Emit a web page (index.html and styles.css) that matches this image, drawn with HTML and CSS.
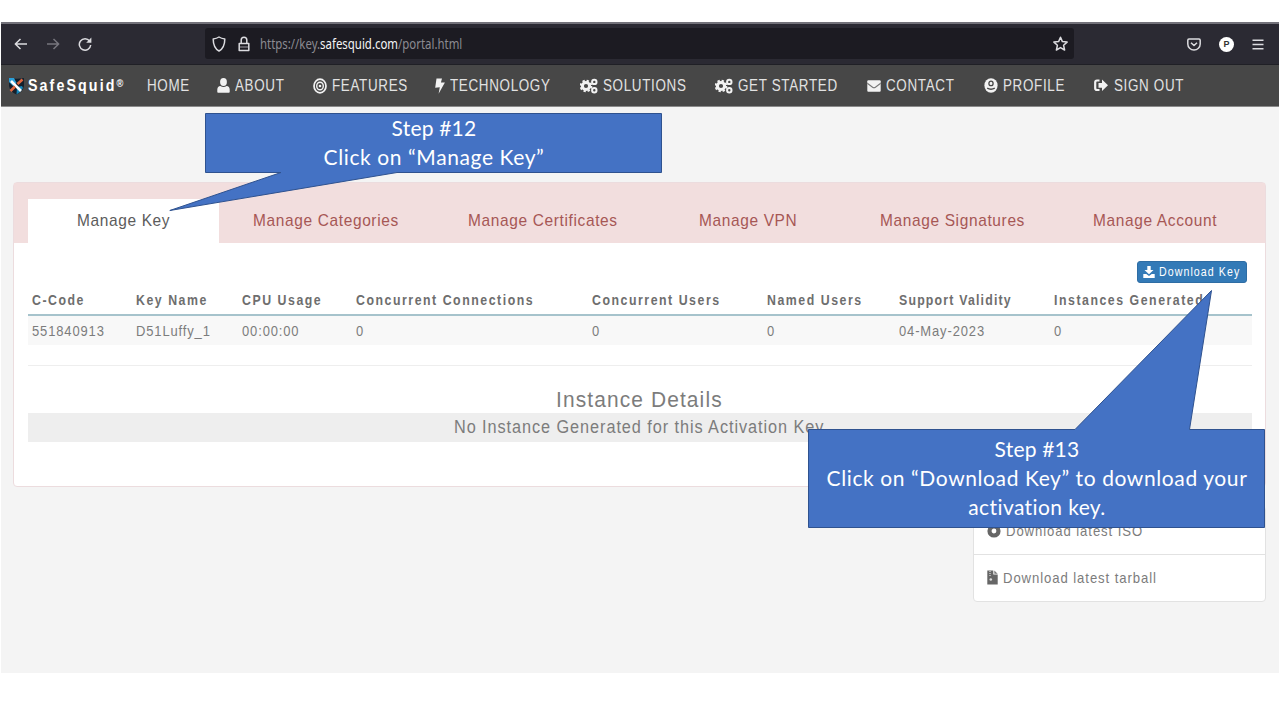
FILE: index.html
```html
<!DOCTYPE html>
<html lang="en">
<head>
<meta charset="utf-8">
<title>SafeSquid Portal</title>
<link rel="stylesheet" href="styles.css">
</head>
<body>
<svg class="defs" width="0" height="0">
  <defs>
    <symbol id="gears" viewBox="0 0 18 16">
      <circle cx="6" cy="8" r="3.600" fill="none" stroke="#f2f2f2" stroke-width="3"/>
      <circle cx="6" cy="8" r="5.300" fill="none" stroke="#f2f2f2" stroke-width="2" stroke-dasharray="2.300 1.860"/>
      <circle cx="14.300" cy="3.900" r="2.200" fill="none" stroke="#f2f2f2" stroke-width="2"/>
      <circle cx="14.300" cy="12.300" r="2.200" fill="none" stroke="#f2f2f2" stroke-width="2"/>
    </symbol>
  </defs>
</svg>
<div class="window">
  <header class="browser">
    <div class="controls">
      <svg width="14" height="14" viewBox="0 0 14 14"><path d="M13 7H1.5M6.5 2 1.3 7l5.2 5" class="line"/></svg>
      <svg width="14" height="14" viewBox="0 0 14 14"><path d="M1 7h11.5M7.5 2l5.2 5-5.2 5" class="line dim"/></svg>
      <svg width="14" height="14" viewBox="0 0 14 14"><path d="M11.6 4A5.7 5.7 0 1 0 12.7 8" class="line"/><path d="M13.4.6v5.2H8.2z" fill="#dcdce0"/></svg>
    </div>
    <div class="address">
      <svg width="14" height="16" viewBox="0 0 14 16"><path d="M7 1c1.8 1.2 3.7 1.7 5.8 1.9 0 5.400-1.300 9.500-5.800 12.100C2.500 12.400 1.200 8.300 1.200 2.900 3.300 2.700 5.200 2.200 7 1z" class="line"/></svg>
      <svg width="12" height="16" viewBox="0 0 12 16"><path d="M1.200 7.500h9.600v7H1.200zM3.200 7.300V4a2.800 2.800 0 0 1 5.600 0v3.300" class="line"/><path d="M2 11h8" class="line dim"/></svg>
      <span class="url">https://key.<b>safesquid.com</b>/portal.html</span>
      <svg class="star" width="15" height="16" viewBox="0 0 15 16"><path d="M7.500 1.300 9.400 5.600l4.700.5-3.500 3.200 1 4.700-4.100-2.400L3.400 14l1-4.700L.9 6.100l4.700-.5z" class="line"/></svg>
    </div>
    <div class="tools">
      <svg width="14" height="13" viewBox="0 0 14 13"><path d="M2 1h10q1.200 0 1.200 1.200V6A6.200 6 0 0 1 .8 6V2.200Q.8 1 2 1zM4 4.700l3 2.800 3-2.800" class="line"/></svg>
      <span class="avatar">P</span>
      <svg width="12" height="11" viewBox="0 0 12 11"><path d="M.5 1.200h11M.5 5.500h11M.5 9.800h11" class="line"/></svg>
    </div>
  </header>

  <nav class="nav">
    <a class="brand">
      <svg width="17" height="18" viewBox="0 0 17 18"><path d="M1 1q7.500 1.500 15 0v8q-1 6-7.500 8.500Q2 15 1 9z" fill="#15202c"/><path d="M1 1h5l2.500 5L5 9 1 5z" fill="#2b9fd8"/><path d="M9 10l5-1 1 2q-2 4-6.500 6.500z" fill="#1786b8"/><path d="M3 4l10 10" stroke="#fff" stroke-width="2.600"/><path d="M14.500 2.500 9.500 7M7 9.500 2.500 14" stroke="#e0663f" stroke-width="2.600"/></svg>
      <span class="t">SafeSquid<sup>®</sup></span>
    </a>
    <a><span class="t">HOME</span></a>
    <a><svg width="13" height="15" viewBox="0 0 13 15"><ellipse cx="6.500" cy="4" rx="3.400" ry="4" fill="#f2f2f2"/><path d="M.3 14v-2.500Q.5 8.200 3.400 8q3.100 1.800 6.200 0 2.900.2 3.100 3.500V14q0 .7-.8.700H1.100Q.3 14.700.3 14z" fill="#f2f2f2"/></svg><span class="t">ABOUT</span></a>
    <a><svg width="14" height="16" viewBox="0 0 14 16"><ellipse cx="7" cy="8" rx="6" ry="6.800" fill="none" stroke="#f2f2f2" stroke-width="1.700"/><ellipse cx="7" cy="8" rx="3.300" ry="3.800" fill="none" stroke="#f2f2f2" stroke-width="1.400"/><circle cx="7" cy="8" r="1.300" fill="#f2f2f2"/></svg><span class="t">FEATURES</span></a>
    <a><svg width="10" height="16" viewBox="0 0 10 16"><path d="M1.500.5h5.500L5.900 4.600l4-.2L3.600 15.700l1.200-6.400-4.600.5z" fill="#f2f2f2"/></svg><span class="t">TECHNOLOGY</span></a>
    <a><svg width="18" height="16"><use href="#gears"/></svg><span class="t">SOLUTIONS</span></a>
    <a><svg width="18" height="16"><use href="#gears"/></svg><span class="t">GET STARTED</span></a>
    <a><svg width="14" height="12" viewBox="0 0 14 12"><rect x=".3" y=".3" width="13.400" height="11.400" rx="1" fill="#f2f2f2"/><path d="M.3 3.300 5.600 7.300q1.400 1 2.800 0L13.700 3.300" fill="none" stroke="#777" stroke-width="1.100"/></svg><span class="t">CONTACT</span></a>
    <a><svg width="14" height="15" viewBox="0 0 14 15"><ellipse cx="7" cy="7.500" rx="6.600" ry="7.300" fill="#f2f2f2"/><ellipse cx="7" cy="5.400" rx="2.100" ry="2.300" fill="none" stroke="#474747" stroke-width="1.300"/><path d="M3.200 10.200q3.800 2 7.600 0" fill="none" stroke="#474747" stroke-width="1.400"/></svg><span class="t">PROFILE</span></a>
    <a><svg width="14" height="13" viewBox="0 0 14 13"><path d="M5.500 1.500H3Q1.200 1.500 1.200 3.300v6Q1.200 11 3 11h2.500" fill="none" stroke="#f2f2f2" stroke-width="2.200"/><path d="M4.500 3.900h3.500V.5L14 6.300 8 12.100V8.700H4.500z" fill="#f2f2f2"/></svg><span class="t">SIGN OUT</span></a>
  </nav>

  <main class="page">
    <section class="panel">
      <div class="tabs">
        <a class="tab active"><span class="t">Manage Key</span></a>
        <a class="tab"><span class="t">Manage Categories</span></a>
        <a class="tab"><span class="t">Manage Certificates</span></a>
        <a class="tab"><span class="t">Manage VPN</span></a>
        <a class="tab"><span class="t">Manage Signatures</span></a>
        <a class="tab"><span class="t">Manage Account</span></a>
      </div>
      <div class="body">
        <div class="actions">
          <button class="download"><svg width="12" height="12" viewBox="0 0 12 12"><path d="M4.300 0h3.400v4h2.800L6 8.300 1.500 4h2.800zM.3 8h3l2.700 2 2.700-2h3v4H.3z" fill="#fff"/></svg><span class="t">Download Key</span></button>
        </div>
        <div class="row head">
          <span class="t">C-Code</span><span class="t">Key Name</span><span class="t">CPU Usage</span><span class="t">Concurrent Connections</span><span class="t">Concurrent Users</span><span class="t">Named Users</span><span class="t validity">Support Validity</span><span class="t">Instances Generated</span>
        </div>
        <div class="row data">
          <span class="t">551840913</span><span class="t">D51Luffy_1</span><span class="t">00:00:00</span><span class="t">0</span><span class="t">0</span><span class="t">0</span><span class="t">04-May-2023</span><span class="t">0</span>
        </div>
        <hr class="rule">
        <h2 class="title"><span class="t">Instance Details</span></h2>
        <p class="notice"><span class="t">No Instance Generated for this Activation Key</span></p>
      </div>
    </section>
    <aside class="downloads">
      <a><svg width="14" height="14" viewBox="0 0 14 14"><circle cx="7" cy="7" r="4.500" fill="none" stroke="#666" stroke-width="4.200"/></svg><span class="t">Download latest ISO</span></a>
      <a><svg width="11" height="15" viewBox="0 0 11 15"><path d="M.3.500h6v4h4.400v10H.3z" fill="#666"/><path d="M7.300.500l3.400 3.200H7.300z" fill="#777"/><path d="M3 1v6" stroke="#ddd" stroke-width="1.200" stroke-dasharray="1 1"/><circle cx="3.800" cy="9.500" r="1.300" fill="#ddd"/></svg><span class="t">Download latest tarball</span></a>
    </aside>
  </main>
</div>

<div class="callout step12">
  <svg width="494" height="99" viewBox="0 0 494 99"><path d="M36.500.5h456v59H228L.8 97.500 112 59.500H36.500z"/></svg>
  <p><span class="step">Step #12</span><br>Click on “Manage Key”</p>
</div>
<div class="callout step13">
  <svg width="458" height="238" viewBox="0 0 458 238"><path d="M.5 139.500H267L403.500.5l-22 139h75v98H.5z"/></svg>
  <p><span class="step">Step #13</span><br>Click on “Download Key” to download your<br><span class="last">activation key.</span></p>
</div>
</body>
</html>
```
FILE: styles.css
```css
* { box-sizing: border-box; }
body {
  margin: 0;
  height: 720px;
  position: relative;
  overflow: hidden;
  background: #fff;
  font-family: "Liberation Sans", Arial, sans-serif;
  color: #7c7c7c;
}
.defs { display: block; }
svg { flex: none; }
.t {
  display: inline-block;
  white-space: nowrap;
  transform: scaleX(.85);
  transform-origin: 0 50%;
}
.line { fill: none; stroke: #dcdce0; stroke-width: 1.5; stroke-linejoin: round; }
.dim { stroke: #77767e; }

.window { padding: 22px 1px 0; }
.browser {
  height: 43px;
  display: flex;
  background: #2b2a33;
  border-top: 2px solid #73727a;
  border-bottom: 1px solid #202026;
}
.controls { width: 204px; display: flex; gap: 18px; align-items: center; padding-left: 13px; }
.address {
  width: 869px;
  height: 31px;
  margin-top: 4px;
  padding-left: 7px;
  border-radius: 3px;
  background: #1c1b22;
  display: flex;
  align-items: center;
}
.address svg + svg { margin-left: 12px; }
.url {
  margin-left: 10px;
  font: 13.500px "Noto Sans", sans-serif;
  color: #8b8a91;
  white-space: nowrap;
  transform: scaleX(.846);
  transform-origin: 0 50%;
}
.url b { font-weight: 400; color: #f4f4f6; }
.address .star { margin-left: auto; margin-right: 6px; }
.tools { display: flex; align-items: center; padding-left: 113px; }
.avatar {
  width: 15px;
  height: 15px;
  margin: 0 19px 0 18px;
  border-radius: 50%;
  background: #fff;
  color: #333;
  font-size: 9px;
  font-weight: 700;
  line-height: 15px;
  text-align: center;
}
.tools svg:last-child { margin-left: -1px; }

.nav {
  height: 42px;
  display: grid;
  grid-template-columns: 138px 70px 96px 122px 145px 135px 152px 117px 110px auto;
  padding: 0 0 0 8px;
  background: #474747;
  border-bottom: 1px solid #8a8a8a;
  color: #e2e2e2;
  font-size: 16px;
  letter-spacing: .8px;
}
.nav a { display: flex; align-items: center; gap: 5px; }
.nav a:last-child { gap: 6px; }
.nav .t { transform: scaleX(.838); padding-top: 1px; }
.nav .brand { gap: 2px; color: #fff; font-size: 17px; font-weight: 700; letter-spacing: 2.500px; }
.brand svg { margin-left: -1px; margin-right: 1px; }
.brand sup { font-size: 11px; line-height: 0; vertical-align: 4px; }

.page { height: 566px; padding: 75px 13px 0 12px; background: #f4f4f4; }
.panel {
  height: 305px;
  background: #fff;
  border: 1px solid #ecdcde;
  border-radius: 4px;
}
.tabs {
  height: 60px;
  padding: 16px 0 0 14px;
  display: grid;
  grid-template-columns: 190.500px 215.500px 231px 180.500px 213px auto;
  background: #f2dede;
  color: #a65755;
  font-size: 17px;
  letter-spacing: .7px;
}
.tab { padding: 12px 0 0 34px; }
.tab .t { transform: scaleX(.91); }
.tab.active { padding-left: 49px; background: #fff; color: #5c5c5c; }

.body { padding: 18px 13px 0 13.500px; }
.actions { display: flex; justify-content: flex-end; padding-right: 5px; }
.download {
  width: 110px;
  height: 22px;
  padding: 0 0 0 5px;
  display: flex;
  align-items: center;
  gap: 4px;
  border: 1px solid #2e6da4;
  border-radius: 3px;
  background: #337ab7;
  color: #fff;
  font-family: inherit;
  font-size: 12.500px;
  letter-spacing: 1.250px;
}
.row {
  display: grid;
  grid-template-columns: 104px 106px 114.500px 236px 174.500px 132.500px 155px auto;
  align-items: center;
  padding-left: 4.300px;
}
.head {
  height: 33px;
  padding-top: 2px;
  border-bottom: 2px solid #a6c3cc;
  color: #6e6e6e;
  font-size: 14.500px;
  font-weight: 700;
  letter-spacing: 1.800px;
}
.validity { letter-spacing: 1.400px; }
.data { height: 29px; background: #f8f8f8; font-size: 15px; letter-spacing: 1px; }
.data .t { transform: scaleX(.865); }
.rule { margin: 20px 0 0; border: 0; border-top: 1px solid #eee; }
.title {
  height: 47px;
  margin: 0;
  padding: 21px 0 0 528.500px;
  font-size: 22.500px;
  font-weight: 400;
  line-height: 26px;
  letter-spacing: 1.200px;
}
.title .t, .notice .t { transform: scaleX(.93); }
.notice {
  height: 29px;
  margin: 0;
  padding-left: 426.500px;
  background: #eee;
  font-size: 17.500px;
  line-height: 29px;
  letter-spacing: 1px;
}

.downloads {
  width: 293px;
  margin: 19px 0 0 auto;
  border: 1px solid #e2e2e2;
  border-radius: 4px;
  background: #fff;
}
.downloads a {
  height: 47px;
  padding-left: 13px;
  display: flex;
  align-items: center;
  gap: 5px;
  font-size: 15px;
  letter-spacing: 1.050px;
}
.downloads .t { transform: scaleX(.875); }
.downloads a + a { border-top: 1px solid #e2e2e2; padding-bottom: 1px; }

.callout { position: absolute; color: #fff; }
.callout svg { display: block; }
.callout path { fill: #4472c4; stroke: #2f528f; }
.callout p {
  position: absolute;
  right: 0;
  width: 458px;
  margin: 0;
  text-align: center;
  font: 21px/29px Lato, sans-serif;
  letter-spacing: .6px;
  white-space: nowrap;
}
.callout .step { letter-spacing: .2px; }
.callout .last { letter-spacing: .4px; }
.step12 { left: 169px; top: 113px; }
.step12 p { top: 0; }
.step13 { left: 808px; top: 290px; }
.step13 p { top: 144px; }
```
